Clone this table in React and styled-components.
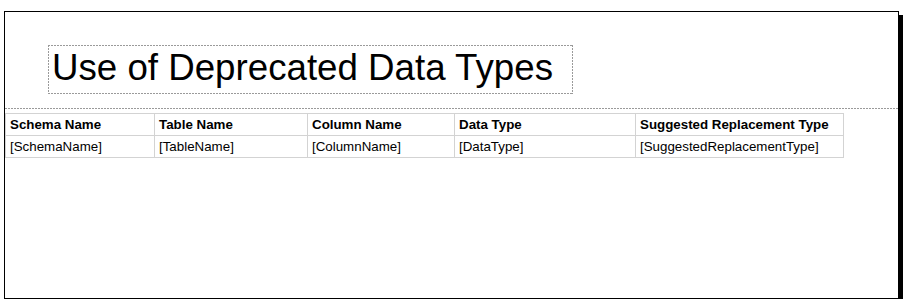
import React from 'react'
import styled, { createGlobalStyle } from 'styled-components'

const GlobalStyle = createGlobalStyle`
    html, body {
        margin: 0;
        padding: 0;
        background: #fff;
        font-family: "Liberation Sans", Arial, sans-serif;
    }
`;

const dashX = 'repeating-linear-gradient(to right, #9a9a9a 0 2px, transparent 2px 3px)';
const dashY = 'repeating-linear-gradient(to bottom, #9a9a9a 0 2px, transparent 2px 3px)';

const Page = styled.div`
    padding: 11px 0 0 4px;
`;

const Sheet = styled.div`
    box-sizing: border-box;
    width: 895px;
    height: 288px;
    border: 1px solid #000;
    box-shadow: 4px 4px 0 #000;
    background: #fff;
    display: flex;
    flex-direction: column;
`;

const Header = styled.div`
    flex-shrink: 0;
    padding: 33px 0 14px 43px;
`;

const TitleBox = styled.div`
    box-sizing: border-box;
    width: 525px;
    height: 49px;
    padding-left: 4px;
    background:
        ${dashX} top left / 100% 1px no-repeat,
        ${dashX} bottom left / 100% 1px no-repeat,
        ${dashY} top left / 1px 100% no-repeat,
        ${dashY} top right / 1px 100% no-repeat;
`;

const Title = styled.h1`
    margin: 0;
    font-weight: normal;
    font-size: 36.7px;
    line-height: 46px;
    color: #000;
`;

const Divider = styled.div`
    flex-shrink: 0;
    height: 1px;
    background: ${dashX};
`;

const Body = styled.div`
    padding-top: 4px;
`;

const Table = styled.table`
    border-collapse: collapse;
    table-layout: fixed;
    width: 838px;
    font-size: 13.33px;
    color: #000;
`;

const Cell = styled.td`
    border: 1px solid #d3d3d3;
    height: 21px;
    padding: 0 3px 0 4px;
    font-weight: ${p => (p.$head ? 'bold' : 'normal')};
    text-align: left;
    white-space: nowrap;
    overflow: hidden;
    vertical-align: middle;
`;

const columns = [
    { name: 'Schema Name', field: 'SchemaName', width: 149 },
    { name: 'Table Name', field: 'TableName', width: 153 },
    { name: 'Column Name', field: 'ColumnName', width: 147 },
    { name: 'Data Type', field: 'DataType', width: 181 },
    { name: 'Suggested Replacement Type', field: 'SuggestedReplacementType', width: 208 },
];

const App = () => {
    return (
        <Page>
            <GlobalStyle />
            <Sheet>
                <Header>
                    <TitleBox>
                        <Title>Use of Deprecated Data Types</Title>
                    </TitleBox>
                </Header>
                <Divider />
                <Body>
                    <Table>
                        <colgroup>
                            {columns.map(c => <col key={c.field} style={{ width: c.width }} />)}
                        </colgroup>
                        <tbody>
                            <tr>
                                {columns.map(c => <Cell as="th" $head key={c.field}>{c.name}</Cell>)}
                            </tr>
                            <tr>
                                {columns.map(c => <Cell key={c.field}>[{c.field}]</Cell>)}
                            </tr>
                        </tbody>
                    </Table>
                </Body>
            </Sheet>
        </Page>
    )
}

export default App
